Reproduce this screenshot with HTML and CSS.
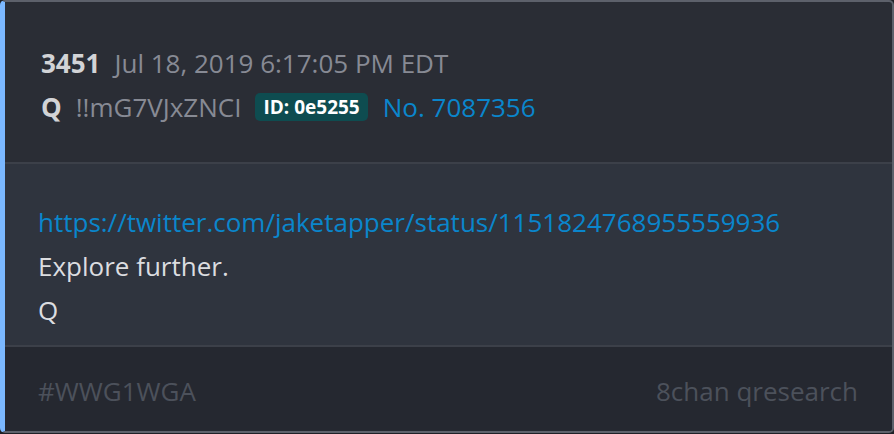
FILE: index.html
```html
<!DOCTYPE html>
<html lang="en">
<head>
    <meta charset="UTF-8">
    <meta name="viewport" content="width=device-width, initial-scale=1.0">
    <title>Post 3451</title>
    <link rel="stylesheet" href="styles.css">
</head>
<body>
    <article class="post">
        <header class="post-head">
            <div class="post-line">
                <span class="post-num">3451</span>
                <span class="post-date">Jul 18, 2019 6:17:05 PM EDT</span>
            </div>
            <div class="post-line">
                <span class="post-name">Q</span>
                <span class="post-trip">!!mG7VJxZNCI</span>
                <span class="post-id">ID: 0e5255</span>
                <a class="post-link" href="#">No. 7087356</a>
            </div>
        </header>
        <section class="post-body">
            <a class="post-link" href="#">https://twitter.com/jaketapper/status/1151824768955559936</a>
            <p>Explore further.</p>
            <p>Q</p>
        </section>
        <footer class="post-foot">
            <span>#WWG1WGA</span>
            <span>8chan qresearch</span>
        </footer>
    </article>
</body>
</html>
```

FILE: styles.css
```css
body {
    margin: 0;
    background-color: #1e2026;
    font-family: "Open Sans", "DejaVu Sans", sans-serif;
    font-size: 26px;
    line-height: 44px;
}
.post {
    box-sizing: border-box;
    width: 894px;
    height: 433px;
    display: flex;
    flex-direction: column;
    background-color: #2a2d35;
    border: 2px solid #5d616b;
    border-left: 5px solid #7bb8ff;
    border-radius: 5px;
    overflow: hidden;
}
.post-head {
    padding: 39px 36px 33px;
    border-bottom: 2px solid #3c4049;
}
.post-line {
    display: flex;
    align-items: center;
    gap: 14px;
}
.post-num,
.post-name {
    font-weight: bold;
    color: #d2d3d6;
}
.post-date,
.post-trip {
    color: #878a94;
}
.post-id {
    background-color: #0e4c50;
    color: #ffffff;
    font-weight: bold;
    font-size: 19px;
    line-height: 28px;
    padding: 0 8px;
    border-radius: 5px;
    margin-right: 1px;
}
.post-link {
    color: #0a86cc;
    text-decoration: none;
}
.post-body {
    flex: 1;
    background-color: #2f343e;
    padding: 36px 33px 0;
    color: #dcdde0;
}
.post-body p {
    margin: 0;
}
.post-foot {
    display: flex;
    justify-content: space-between;
    padding: 22px 34px 0 33px;
    height: 62px;
    border-top: 2px solid #3c4049;
    background-color: #252830;
    color: #4c515b;
}
```
